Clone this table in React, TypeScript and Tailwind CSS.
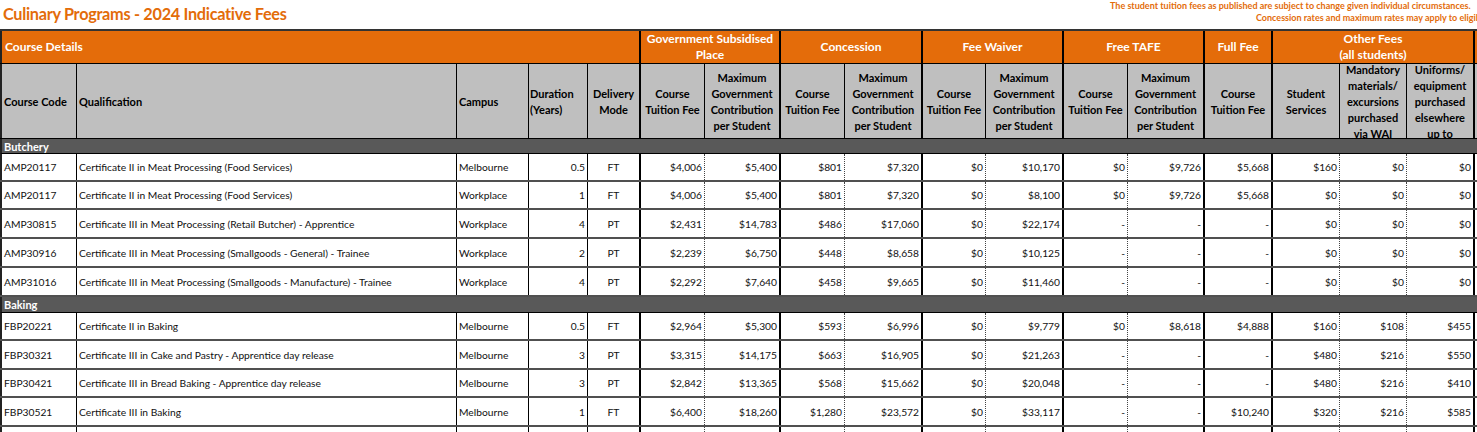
const GRID =
  "grid grid-cols-[77px_380px_72px_59px_53px_64px_76px_64px_78px_63px_78px_64px_77px_68px_67px_67px_68px_160px]";

// right-hand borders for each column in the data rows
const dataBorders = [
  "border-l-2 border-l-[#222] border-r border-r-black",
  "border-r border-r-black",
  "border-r border-r-black",
  "border-r border-r-black",
  "border-r-2 border-r-black",
  "border-r border-dotted border-r-[#444]",
  "border-r-2 border-r-black",
  "border-r border-dotted border-r-[#444]",
  "border-r-2 border-r-black",
  "border-r border-dotted border-r-[#444]",
  "border-r-2 border-r-black",
  "border-r border-dotted border-r-[#444]",
  "border-r-2 border-r-black",
  "border-r-2 border-r-black",
  "border-r border-dotted border-r-[#444]",
  "border-r border-dotted border-r-[#444]",
  "border-r-2 border-r-black",
  "",
];

// header borders are solid everywhere
const headBorders = [
  "border-l-2 border-l-[#222] border-r border-r-black",
  "border-r border-r-black",
  "border-r border-r-black",
  "border-r border-r-black",
  "border-r-2 border-r-black",
  "border-r border-r-black",
  "border-r-2 border-r-black",
  "border-r border-r-black",
  "border-r-2 border-r-black",
  "border-r border-r-black",
  "border-r-2 border-r-black",
  "border-r border-r-black",
  "border-r-2 border-r-black",
  "border-r-2 border-r-black",
  "border-r border-r-black",
  "border-r border-r-black",
  "border-r-2 border-r-black",
  "",
];

const dataAlign = [
  "justify-start pl-[2px]",
  "justify-start pl-[2px]",
  "justify-start pl-[2px]",
  "justify-end pr-[2px]",
  "justify-center",
  "justify-end pr-[2px]",
  "justify-end pr-[2px]",
  "justify-end pr-[2px]",
  "justify-end pr-[2px]",
  "justify-end pr-[2px]",
  "justify-end pr-[2px]",
  "justify-end pr-[2px]",
  "justify-end pr-[2px]",
  "justify-end pr-[2px]",
  "justify-end pr-[2px]",
  "justify-end pr-[2px]",
  "justify-end pr-[2px]",
  "",
];

const tuition = ["Course", "Tuition Fee"];
const maxGov = ["Maximum", "Government", "Contribution", "per Student"];

const subHeads: { lines: string[]; align: string }[] = [
  { lines: ["Course Code"], align: "justify-start text-left pl-[2px]" },
  { lines: ["Qualification"], align: "justify-start text-left pl-[2px]" },
  { lines: ["Campus"], align: "justify-start text-left pl-[2px]" },
  { lines: ["Duration", "(Years)"], align: "justify-start text-left pl-[1px]" },
  { lines: ["Delivery", "Mode"], align: "justify-center text-center" },
  { lines: tuition, align: "justify-center text-center" },
  { lines: maxGov, align: "justify-center text-center" },
  { lines: tuition, align: "justify-center text-center" },
  { lines: maxGov, align: "justify-center text-center" },
  { lines: tuition, align: "justify-center text-center" },
  { lines: maxGov, align: "justify-center text-center" },
  { lines: tuition, align: "justify-center text-center" },
  { lines: maxGov, align: "justify-center text-center" },
  { lines: tuition, align: "justify-center text-center" },
  { lines: ["Student", "Services"], align: "justify-center text-center" },
  { lines: ["Mandatory", "materials/", "excursions", "purchased", "via WAI"], align: "justify-center text-center" },
  { lines: ["Uniforms/", "equipment", "purchased", "elsewhere", "up to"], align: "justify-center text-center" },
  { lines: [], align: "" },
];

const groups = [
  { label: ["Course Details"], span: "col-span-5", align: "justify-start pl-[3px]", border: "border-l-2 border-l-[#222] border-r-2 border-r-black" },
  { label: ["Government Subsidised", "Place"], span: "col-span-2", align: "justify-center", border: "border-r-2 border-r-black" },
  { label: ["Concession"], span: "col-span-2", align: "justify-center", border: "border-r-2 border-r-black" },
  { label: ["Fee Waiver"], span: "col-span-2", align: "justify-center", border: "border-r-2 border-r-black" },
  { label: ["Free TAFE"], span: "col-span-2", align: "justify-center", border: "border-r-2 border-r-black" },
  { label: ["Full Fee"], span: "col-span-1", align: "justify-center", border: "border-r-2 border-r-black" },
  { label: ["Other Fees", "(all students)"], span: "col-span-3", align: "justify-center", border: "border-r-2 border-r-black" },
  { label: [], span: "col-span-1", align: "", border: "" },
];

const sections = [
  {
    name: "Butchery",
    h: "h-[15px]",
    rows: [
      { h: "h-[28px]", c: ["AMP20117", "Certificate II in Meat Processing (Food Services)", "Melbourne", "0.5", "FT", "$4,006", "$5,400", "$801", "$7,320", "$0", "$10,170", "$0", "$9,726", "$5,668", "$160", "$0", "$0"] },
      { h: "h-[28px]", c: ["AMP20117", "Certificate II in Meat Processing (Food Services)", "Workplace", "1", "FT", "$4,006", "$5,400", "$801", "$7,320", "$0", "$8,100", "$0", "$9,726", "$5,668", "$0", "$0", "$0"] },
      { h: "h-[29px]", c: ["AMP30815", "Certificate III in Meat Processing (Retail Butcher) - Apprentice", "Workplace", "4", "PT", "$2,431", "$14,783", "$486", "$17,060", "$0", "$22,174", "-", "-", "-", "$0", "$0", "$0"] },
      { h: "h-[29px]", c: ["AMP30916", "Certificate III in Meat Processing (Smallgoods - General) - Trainee", "Workplace", "2", "PT", "$2,239", "$6,750", "$448", "$8,658", "$0", "$10,125", "-", "-", "-", "$0", "$0", "$0"] },
      { h: "h-[29px]", c: ["AMP31016", "Certificate III in Meat Processing (Smallgoods - Manufacture) - Trainee", "Workplace", "4", "PT", "$2,292", "$7,640", "$458", "$9,665", "$0", "$11,460", "-", "-", "-", "$0", "$0", "$0"] },
    ],
  },
  {
    name: "Baking",
    h: "h-[16px]",
    rows: [
      { h: "h-[28px]", c: ["FBP20221", "Certificate II in Baking", "Melbourne", "0.5", "FT", "$2,964", "$5,300", "$593", "$6,996", "$0", "$9,779", "$0", "$8,618", "$4,888", "$160", "$108", "$455"] },
      { h: "h-[29px]", c: ["FBP30321", "Certificate III in Cake and Pastry - Apprentice day release", "Melbourne", "3", "PT", "$3,315", "$14,175", "$663", "$16,905", "$0", "$21,263", "-", "-", "-", "$480", "$216", "$550"] },
      { h: "h-[28px]", c: ["FBP30421", "Certificate III in Bread Baking - Apprentice day release", "Melbourne", "3", "PT", "$2,842", "$13,365", "$568", "$15,662", "$0", "$20,048", "-", "-", "-", "$480", "$216", "$410"] },
      { h: "h-[29px]", c: ["FBP30521", "Certificate III in Baking", "Melbourne", "1", "FT", "$6,400", "$18,260", "$1,280", "$23,572", "$0", "$33,117", "-", "-", "$10,240", "$320", "$216", "$585"] },
      { h: "h-[29px]", c: ["", "", "", "", "", "", "", "", "", "", "", "", "", "", "", "", ""] },
    ],
  },
];

function Lines({ lines }: { lines: string[] }) {
  return (
    <div>
      {lines.map((l, i) => (
        <div key={i} className="whitespace-nowrap">{l}</div>
      ))}
    </div>
  );
}

export default function App() {
  return (
    <div className="w-[1477px] h-[432px] overflow-hidden bg-white font-['Lato',sans-serif] text-[#111]">
      <div className="w-[1640px]">
        {/* title bar */}
        <div className="flex h-[29px]">
          <h1 className="w-[300px] pl-[3px] pt-[4px] text-[16.3px] font-bold leading-[20px] text-[#e36c0a] tracking-[-0.3px] whitespace-nowrap">
            Culinary Programs - 2024 Indicative Fees
          </h1>
          <div className="ml-[810px] flex flex-col text-[9px] font-bold leading-[12px] text-[#e36c0a] whitespace-nowrap">
            <span>The student tuition fees as published are subject to change given individual circumstances.</span>
            <span className="pl-[146px]">Concession rates and maximum rates may apply to eligible students.</span>
          </div>
        </div>

        {/* orange group header */}
        <div className={`${GRID} h-[35px] border-t-2 border-t-[#333] border-b border-b-black bg-[#e46c0a] text-[12px] font-bold leading-[16px] text-white`}>
          {groups.map((g, i) => (
            <div key={i} className={`${g.span} ${g.border} ${g.align} flex items-center text-center`}>
              <Lines lines={g.label} />
            </div>
          ))}
        </div>

        {/* grey column header */}
        <div className={`${GRID} h-[75px] border-b border-b-black bg-[#bfbfbf] text-[11px] font-bold leading-[16px] text-black`}>
          {subHeads.map((s, i) => (
            <div key={i} className={`${headBorders[i]} ${s.align} flex items-center overflow-hidden pt-[1px]`}>
              <Lines lines={s.lines} />
            </div>
          ))}
        </div>

        {sections.map((sec) => (
          <div key={sec.name}>
            <div className={`${sec.h} flex items-center border-b border-b-black border-l-2 border-l-[#222] bg-[#595959] pl-[2px] text-[11px] font-bold leading-none text-white`}>
              {sec.name}
            </div>
            {sec.rows.map((r, ri) => (
              <div key={ri} className={`${GRID} ${r.h} border-b-2 border-b-[#505050] text-[10.25px]`}>
                {[...r.c, ""].map((v, ci) => (
                  <div key={ci} className={`${dataBorders[ci]} ${dataAlign[ci]} flex items-center whitespace-nowrap overflow-hidden pt-[2px]`}>
                    {v}
                  </div>
                ))}
              </div>
            ))}
          </div>
        ))}
      </div>
    </div>
  );
}
